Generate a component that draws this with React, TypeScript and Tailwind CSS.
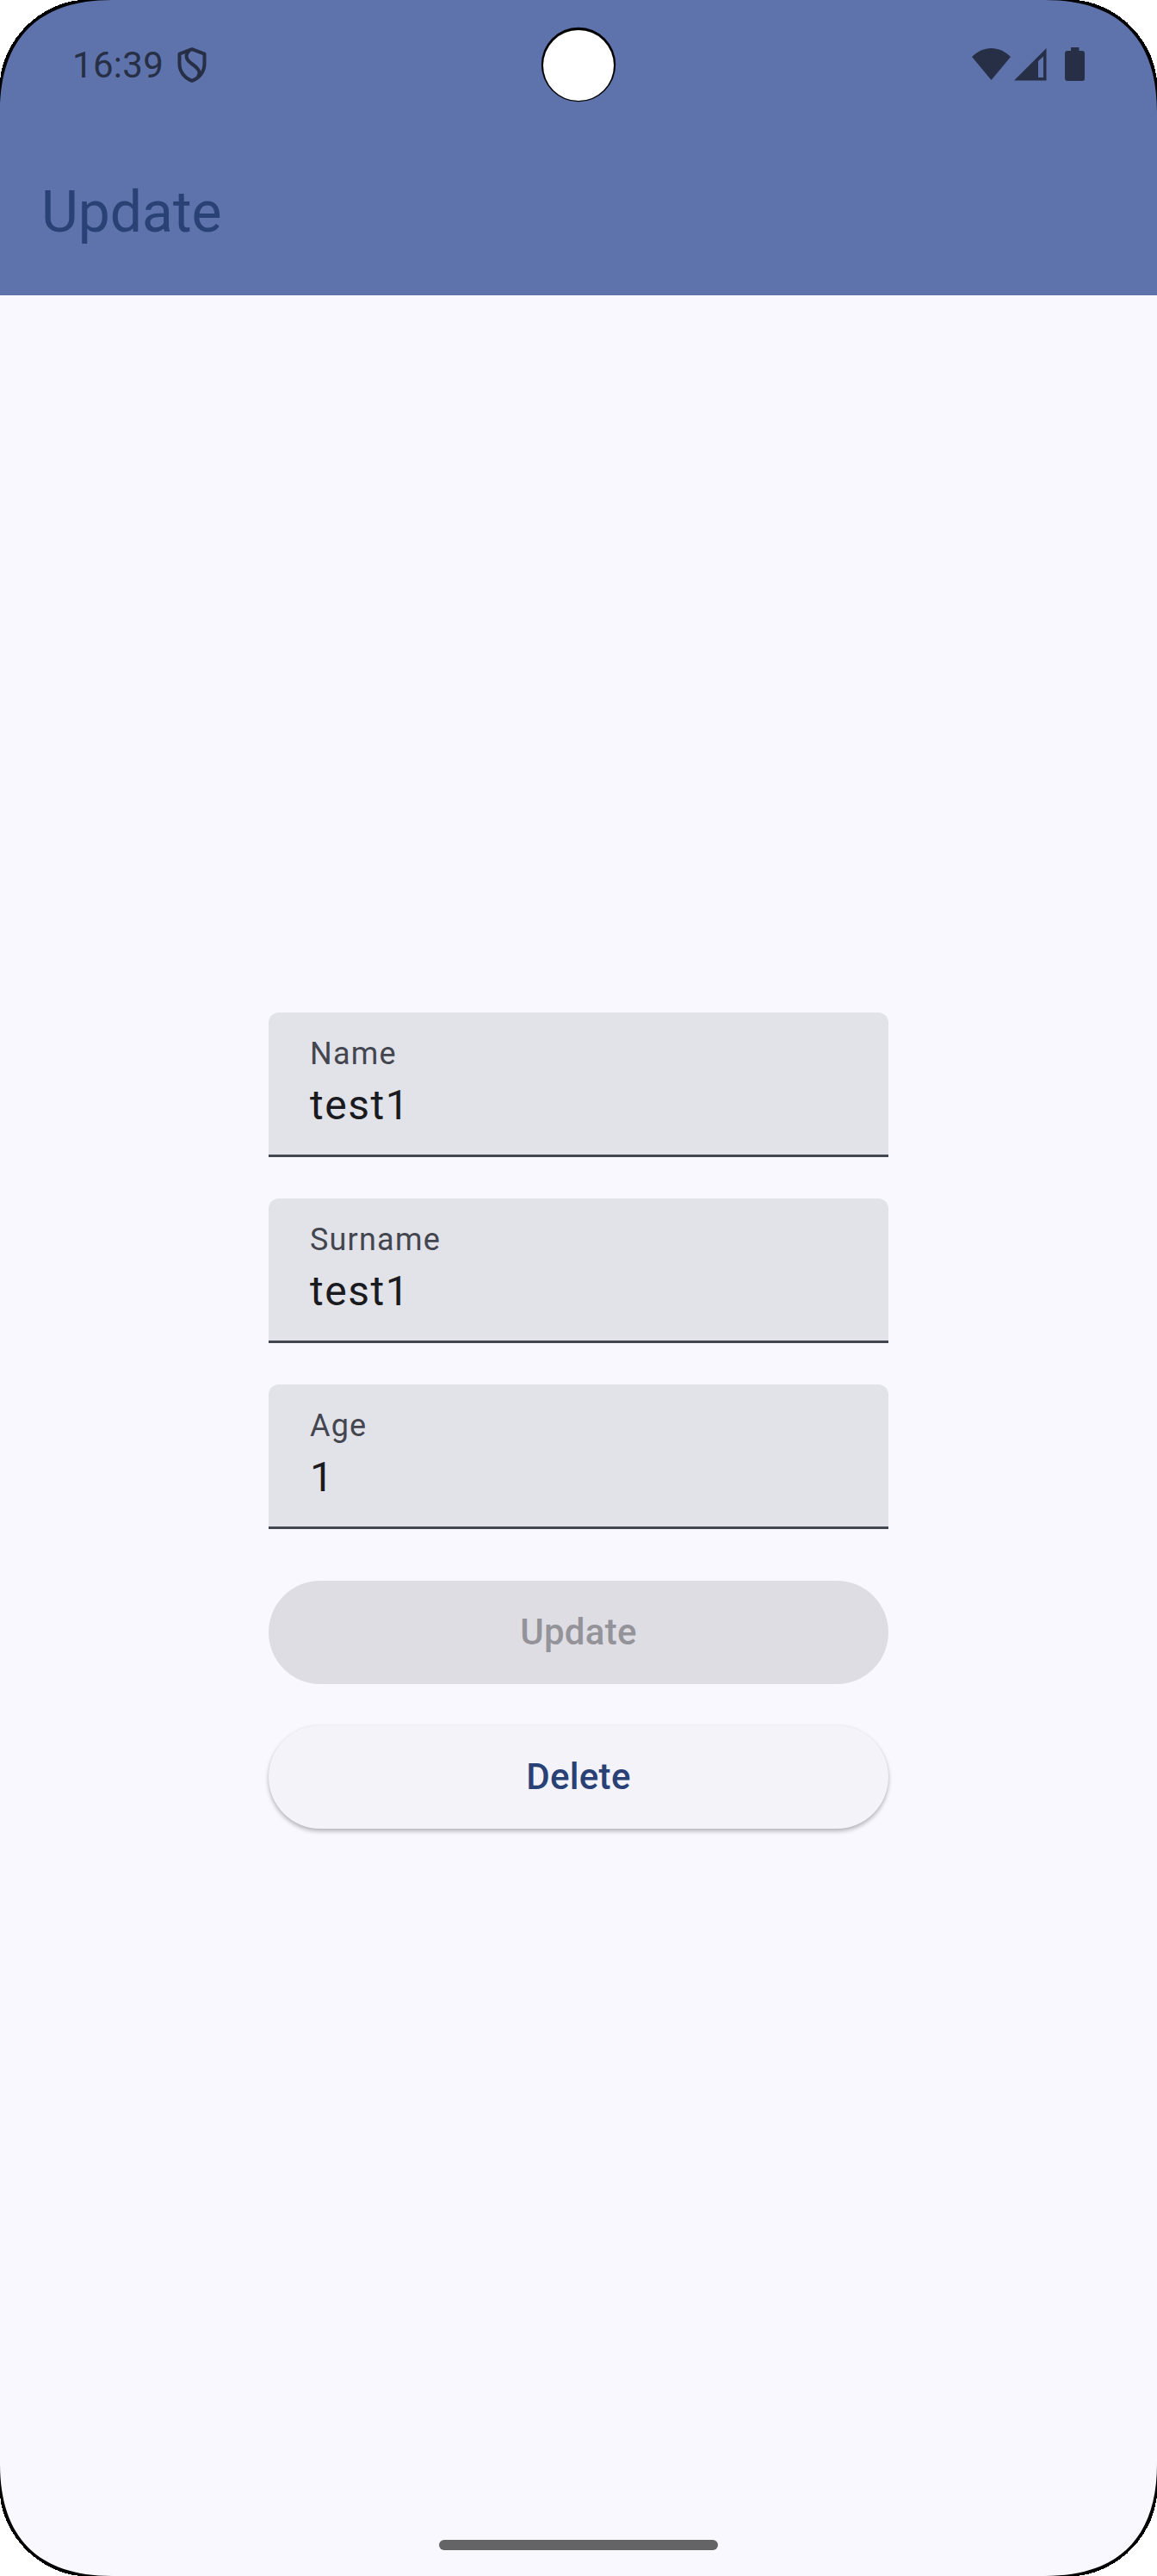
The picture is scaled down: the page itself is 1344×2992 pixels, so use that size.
import React from "react";

function Corner({ className }: { className: string }) {
  return (
    <svg className={`absolute h-[132px] w-[132px] ${className}`} viewBox="0 0 132 132">
      <path d="M0 0H130C44.700 0 0 44.700 0 130Z" fill="#000" />
      <path d="M0 0H93C45 5 5 45 0 93Z" fill="#fff" shapeRendering="crispEdges" />
    </svg>
  );
}

function StatusBar() {
  return (
    <div className="relative flex h-[151px] items-start justify-between pl-[84px] pr-[84px] text-[#262f45]">
      <div className="flex pt-[51px]">
        <span className="w-[122px] text-[42px] leading-[49px] tracking-[0.3px]">16:39</span>
        <svg className="mt-[4px] h-[41px] w-[34px]" viewBox="0 0 34 41" fill="none" stroke="currentColor" strokeWidth="4" strokeLinejoin="round">
          <path d="M17 2.2 31.500 7.6V19C31.500 28 26 35.5 17 38.8C8 35.5 2.500 28 2.500 19V7.6Z" />
          <path d="M14 3.500C8.500 9 10 14 16 18.500C24 24 28.500 29 23.500 34.500" />
        </svg>
      </div>
      <svg className="absolute left-[628px] top-[31px] h-[88px] w-[88px]" viewBox="0 0 88 88">
        <circle cx="44" cy="44" r="43.2" fill="#000" />
        <circle cx="44" cy="45" r="41" fill="#fff" />
      </svg>
      <svg className="mt-[54px] h-[42px] w-[132px]" viewBox="0 0 132 42" fill="currentColor">
        <path d="M1 12C14-1.500 33-1.500 46 12L23.500 39Z" />
        <path fillRule="evenodd" d="M50 39.500 87.500 2V39.500ZM78 17V36H84V11.500Z" />
        <path d="M116 1h9.500v4H129q3 0 3 3V37q0 3-3 3H112q-3 0-3-3V8q0-3 3-3h4Z" />
      </svg>
    </div>
  );
}

function Field({ label, value }: { label: string; value: string }) {
  return (
    <label className="flex h-[168px] flex-col rounded-t-[12px] bg-[#e2e2e9]">
      <span className="px-12 pt-6 text-[36px] leading-[48px] tracking-[1.2px] text-[#44464f]">{label}</span>
      <span className="px-12 text-[48px] leading-[72px] tracking-[1.5px] text-[#1a1b20]">{value}</span>
      <span className="mt-auto h-[3px] bg-[#44464f]" />
    </label>
  );
}

export default function App() {
  return (
    <div className="relative flex h-[2992px] w-[1344px] flex-col overflow-hidden bg-[#faf8ff] font-['Roboto',sans-serif]">
      <header className="h-[343px] shrink-0 bg-[#5e73ab]">
        <StatusBar />
        <h1 className="flex h-[192px] items-center pl-12 text-[66px] font-normal leading-[84px] text-[#294174]">Update</h1>
      </header>
      <main className="mx-auto flex w-[720px] flex-1 flex-col gap-12 pt-[833px]">
        <Field label="Name" value="test1" />
        <Field label="Surname" value="test1" />
        <Field label="Age" value="1" />
        <button disabled className="mt-3 h-[120px] shrink-0 rounded-full bg-[#dfdde4] text-[42px] font-medium leading-[60px] tracking-[0.3px] text-[#949399]">Update</button>
        <button className="h-[120px] shrink-0 rounded-full bg-[#f4f3fa] text-[42px] font-medium leading-[60px] tracking-[0.3px] text-[#294174] shadow-[0_3px_5px_rgba(0,0,0,0.27),0_0_3px_rgba(0,0,0,0.05)]">Delete</button>
      </main>
      <footer className="flex h-[42px] shrink-0 justify-center">
        <div className="h-3 w-[324px] rounded-full bg-[#646466]" />
      </footer>
      <Corner className="left-0 top-0" />
      <Corner className="right-0 top-0 -scale-x-100" />
      <Corner className="bottom-0 left-0 -scale-y-100" />
      <Corner className="bottom-0 right-0 rotate-180" />
    </div>
  );
}
